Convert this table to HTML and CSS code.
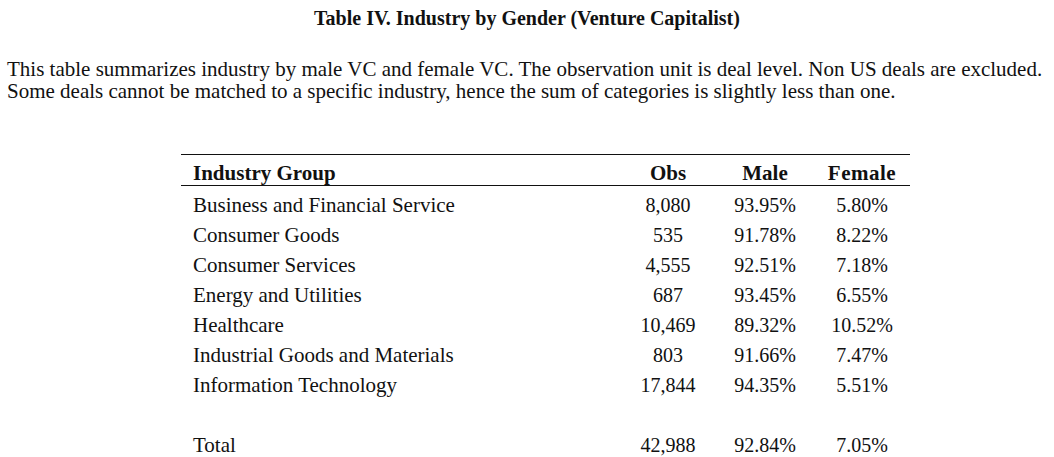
FILE: index.html
```html
<!DOCTYPE html>
<html>
<head>
<meta charset="utf-8">
<link rel="stylesheet" href="styles.css">
</head>
<body>
<h1 class="title">Table IV. Industry by Gender (Venture Capitalist)</h1>
<p class="note">This table summarizes industry by male VC and female VC. The observation unit is deal level. Non US deals are excluded.<br>Some deals cannot be matched to a specific industry, hence the sum of categories is slightly less than one.</p>
<table class="data">
  <thead>
    <tr><th class="name">Industry Group</th><th class="obs">Obs</th><th class="male">Male</th><th class="female">Female</th></tr>
  </thead>
  <tbody>
    <tr><td class="name">Business and Financial Service</td><td>8,080</td><td>93.95%</td><td>5.80%</td></tr>
    <tr><td class="name">Consumer Goods</td><td>535</td><td>91.78%</td><td>8.22%</td></tr>
    <tr><td class="name">Consumer Services</td><td>4,555</td><td>92.51%</td><td>7.18%</td></tr>
    <tr><td class="name">Energy and Utilities</td><td>687</td><td>93.45%</td><td>6.55%</td></tr>
    <tr><td class="name">Healthcare</td><td>10,469</td><td>89.32%</td><td>10.52%</td></tr>
    <tr><td class="name">Industrial Goods and Materials</td><td>803</td><td>91.66%</td><td>7.47%</td></tr>
    <tr><td class="name">Information Technology</td><td>17,844</td><td>94.35%</td><td>5.51%</td></tr>
    <tr class="spacer"><td colspan="4"></td></tr>
    <tr><td class="name">Total</td><td>42,988</td><td>92.84%</td><td>7.05%</td></tr>
  </tbody>
</table>
</body>
</html>
```
FILE: styles.css
```css
html, body {
  margin: 0;
  padding: 0;
  background: #ffffff;
  color: #111111;
  font-family: "Liberation Serif", "Times New Roman", serif;
}
.title {
  margin: 0;
  padding-top: 6px;
  text-align: center;
  font-size: 20px;
  font-weight: bold;
  line-height: 24px;
}
.note {
  margin: 28px 0 0 7px;
  font-size: 21px;
  line-height: 22px;
}
.data {
  margin: 52px 0 0 181px;
  width: 729px;
  border-collapse: collapse;
  table-layout: fixed;
  font-size: 20px;
  border-top: 1px solid #111;
}
.data th, .data td {
  padding: 8px 0 0 0;
  text-align: center;
  height: 22px;
  line-height: 22px;
  vertical-align: top;
}
.data th {
  padding-top: 7px;
  padding-bottom: 1px;
  border-bottom: 1px solid #111;
  font-weight: bold;
  font-size: 21px;
}
.data .name {
  text-align: left;
  padding-left: 12px;
  font-size: 21px;
}
.data th.name { width: 427px; }
.data th.obs { width: 96px; }
.data th.male { width: 98px; }
.data th.female { width: 96px; letter-spacing: 0.5px; }
```
